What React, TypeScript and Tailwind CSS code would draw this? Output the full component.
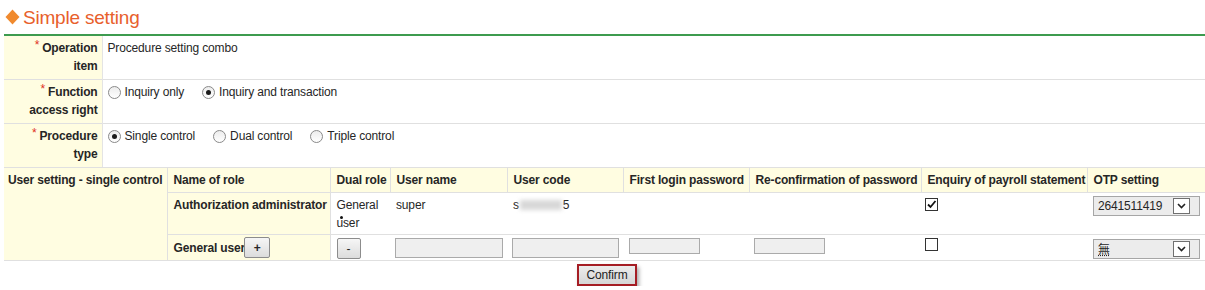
import React from "react";

function Radio({ checked }: { checked?: boolean }) {
  return (
    <span className="inline-flex h-[13px] w-[13px] shrink-0 items-center justify-center rounded-full border border-[#8a8a8a] bg-linear-to-b from-[#ececec] to-white">
      {checked && <span className="h-[5px] w-[5px] rounded-full bg-[#1a1a1a]" />}
    </span>
  );
}

function RadioOpt({ checked, label }: { checked?: boolean; label: string }) {
  return (
    <span className="inline-flex items-center gap-[4px]">
      <Radio checked={checked} />
      <span>{label}</span>
    </span>
  );
}

function Checkbox({ checked }: { checked?: boolean }) {
  return (
    <span className="inline-flex h-[13px] w-[13px] items-center justify-center border border-[#333] bg-white">
      {checked && (
        <svg width="11" height="11" viewBox="0 0 11 11">
          <path d="M2 5.5 L4.5 8 L9.5 2" fill="none" stroke="#111" strokeWidth="1.8" />
        </svg>
      )}
    </span>
  );
}

function Select({ value, cjk }: { value: string; cjk?: boolean }) {
  return (
    <div className="flex h-[20px] w-[107px] items-center justify-between border border-[#a6a6a6] bg-[#ececec] pl-[4px] pr-[9px]">
      <span className={cjk ? "font-['Noto_Sans_CJK_TC',sans-serif] text-[12px] leading-none underline decoration-dotted" : ""}>{value}</span>
      <span className="flex h-[16px] w-[17px] items-center justify-center border border-[#707070] bg-white">
        <svg width="9" height="6" viewBox="0 0 9 6">
          <path d="M1 1 L4.5 4.5 L8 1" fill="none" stroke="#222" strokeWidth="1.6" />
        </svg>
      </span>
    </div>
  );
}

function Btn({ label, w }: { label: string; w: string }) {
  return (
    <span className={`inline-flex h-[21px] ${w} items-center justify-center rounded-[2px] border border-[#8c8c8c] bg-linear-to-b from-[#f6f6f6] to-[#dcdcdc] text-[12px] leading-none`}>
      {label}
    </span>
  );
}

function Label({ children, star = true }: { children: React.ReactNode; star?: boolean }) {
  return (
    <td className="w-[98px] border-r border-[#e4e4e4] bg-[#fffde1] pb-[4px] pl-[2px] pr-[4px] pt-[3px] text-right align-top font-bold">
      {star && <span className="relative -top-[3px] mr-[3px] font-normal text-[#e0301e]">*</span>}
      {children}
    </td>
  );
}

export default function App() {
  const th = "border-b border-r border-[#e0e0e0] bg-[#fffde1] py-[3px] pl-[6px] text-left align-top font-bold whitespace-nowrap";
  return (
    <div className="w-[1205px] bg-white font-['Liberation_Sans',Arial,sans-serif] text-[12px] leading-[18px] tracking-[-0.15px] text-[#262626]">
      <div className="flex h-[34px] items-center gap-[3px] pl-[5px]">
        <svg width="15" height="16" viewBox="0 0 15 16">
          <polygon points="7.5,0.5 14.5,8 7.5,15.5 0.5,8" fill="#f08a2e" />
        </svg>
        <span className="text-[19px] leading-none tracking-[-0.2px] text-[#e8602c]">Simple setting</span>
      </div>
      <div className="pl-[4px]">
        <table className="w-[1201px] table-fixed border-collapse border-t-2 border-[#3d9b4f]">
          <colgroup>
            <col className="w-[98px]" />
            <col />
          </colgroup>
          <tbody>
            <tr className="h-[44px] border-b border-[#e0e0e0]">
              <Label>
                Operation
                <br />
                item
              </Label>
              <td className="pl-[5px] pt-[3px] align-top">Procedure setting combo</td>
            </tr>
            <tr className="h-[44px] border-b border-[#e0e0e0]">
              <Label>
                Function
                <br />
                access right
              </Label>
              <td className="pl-[5px] pt-[3px] align-top">
                <div className="flex gap-[18px]">
                  <RadioOpt label="Inquiry only" />
                  <RadioOpt checked label="Inquiry and transaction" />
                </div>
              </td>
            </tr>
            <tr className="h-[43px]">
              <Label>
                Procedure
                <br />
                type
              </Label>
              <td className="pl-[5px] pt-[3px] align-top">
                <div className="flex gap-[18px]">
                  <RadioOpt checked label="Single control" />
                  <RadioOpt label="Dual control" />
                  <RadioOpt label="Triple control" />
                </div>
              </td>
            </tr>
          </tbody>
        </table>
        <table className="w-[1201px] table-fixed border-collapse border-t border-b border-[#e0e0e0]">
          <colgroup>
            <col className="w-[163px]" />
            <col className="w-[163px]" />
            <col className="w-[60px]" />
            <col className="w-[117px]" />
            <col className="w-[116px]" />
            <col className="w-[126px]" />
            <col className="w-[172px]" />
            <col className="w-[166px]" />
            <col className="w-[118px]" />
          </colgroup>
          <tbody>
            <tr>
              <td rowSpan={3} className="border-r border-[#e0e0e0] bg-[#fffde1] py-[3px] pl-[4px] align-top font-bold whitespace-nowrap">
                User setting - single control
              </td>
              <td className={th}>Name of role</td>
              <td className={th}>Dual role</td>
              <td className={th}>User name</td>
              <td className={th}>User code</td>
              <td className={th}>First login password</td>
              <td className={th}>Re-confirmation of password</td>
              <td className={th}>Enquiry of payroll statement</td>
              <td className="border-b border-[#e0e0e0] bg-[#fffde1] py-[3px] pl-[6px] text-left align-top font-bold">OTP setting</td>
            </tr>
            <tr className="h-[42px] border-b border-[#e0e0e0]">
              <td className="border-r border-[#e0e0e0] bg-[#fffde1] pb-[3px] pl-[6px] pt-[3px] align-top font-bold whitespace-nowrap">
                Authorization administrator
              </td>
              <td className="pl-[6px] pt-[3px] align-top">
                <div className="relative">
                  General user
                  <span className="absolute left-[3px] top-[20px] h-[3px] w-[3px] rounded-full bg-[#111]" />
                </div>
              </td>
              <td className="pl-[6px] pt-[3px] align-top">super</td>
              <td className="pl-[6px] pt-[3px] align-top">
                <span className="inline-flex items-center">
                  s
                  <span className="mx-[1px] inline-block h-[10px] w-[42px] bg-[#d8d8d8] blur-[2px]" />
                  5
                </span>
              </td>
              <td />
              <td />
              <td className="pl-[4px] pt-[4px] align-top">
                <Checkbox checked />
              </td>
              <td className="pl-[6px] pt-[3px] align-top">
                <Select value="2641511419" />
              </td>
            </tr>
            <tr className="h-[26px]">
              <td className="border-r border-[#e0e0e0] bg-[#fffde1] pb-[2px] pl-[6px] pt-[2px] align-top font-bold whitespace-nowrap">
                <div className="flex items-center">
                  <span>General user</span>
                  <span className="-ml-[1px]">
                    <Btn label="+" w="w-[26px]" />
                  </span>
                </div>
              </td>
              <td className="pl-[6px] pt-[3px] align-top">
                <Btn label="-" w="w-[24px]" />
              </td>
              <td className="pl-[5px] pt-[3px] align-top">
                <div className="h-[20px] w-[108px] border border-[#aaa] bg-[#efefef]" />
              </td>
              <td className="pl-[5px] pt-[3px] align-top">
                <div className="h-[20px] w-[107px] border border-[#aaa] bg-[#efefef]" />
              </td>
              <td className="pl-[6px] pt-[3px] align-top">
                <div className="h-[16px] w-[71px] border border-[#aaa] bg-[#efefef]" />
              </td>
              <td className="pl-[5px] pt-[3px] align-top">
                <div className="h-[16px] w-[71px] border border-[#aaa] bg-[#efefef]" />
              </td>
              <td className="pl-[4px] pt-[3px] align-top">
                <Checkbox />
              </td>
              <td className="pl-[6px] pt-[4px] align-top">
                <Select value="無" cjk />
              </td>
            </tr>
          </tbody>
        </table>
        <div className="flex justify-center pt-[3px]">
          <button className="ml-[5px] h-[22px] w-[60px] border-2 border-[#a51d24] bg-linear-to-b from-[#ececec] to-[#d6d6d6] text-[12px] leading-none text-[#222] shadow-[2px_3px_4px_rgba(0,0,0,0.35)]">
            Confirm
          </button>
        </div>
      </div>
    </div>
  );
}
